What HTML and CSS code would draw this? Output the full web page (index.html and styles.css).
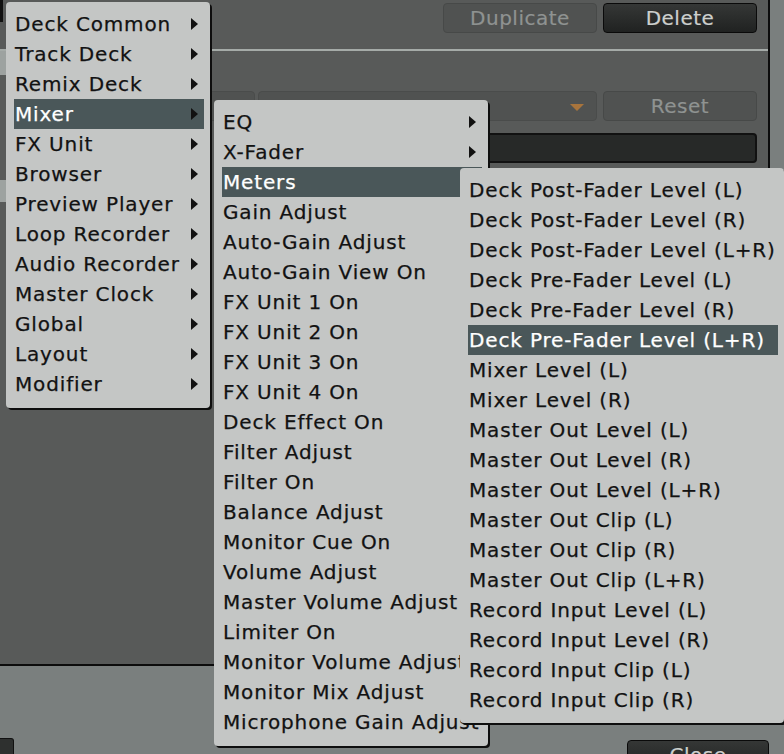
FILE: index.html
```html
<!DOCTYPE html>
<html lang="en">
<head>
    <meta charset="UTF-8">
    <title>Controller Mapping</title>
    <link rel="stylesheet" href="styles.css">
</head>
<body>
    <div class="frame">
        <div class="panel">
            <div class="side">
                <div class="side-mark"></div>
                <div class="side-tab"></div>
                <div class="side-tab low"></div>
            </div>
            <div class="main">
                <div class="row top-row">
                    <button class="btn">Duplicate</button>
                    <button class="btn dark">Delete</button>
                </div>
                <hr class="sep">
                <div class="row mid-row">
                    <div class="box small"></div>
                    <div class="box select"><span class="caret"></span></div>
                    <button class="btn">Reset</button>
                </div>
                <div class="row">
                    <div class="field"></div>
                </div>
            </div>
        </div>
        <div class="footer">
            <div class="foot-left"></div>
            <button class="btn dark close">Close</button>
        </div>

        <!-- menu cascade -->
        <ul class="menu m1">
            <li class="item"><span>Deck Common</span><i class="arrow"></i></li>
            <li class="item"><span>Track Deck</span><i class="arrow"></i></li>
            <li class="item"><span>Remix Deck</span><i class="arrow"></i></li>
            <li class="item on"><span>Mixer</span><i class="arrow"></i></li>
            <li class="item"><span>FX Unit</span><i class="arrow"></i></li>
            <li class="item"><span>Browser</span><i class="arrow"></i></li>
            <li class="item"><span>Preview Player</span><i class="arrow"></i></li>
            <li class="item"><span>Loop Recorder</span><i class="arrow"></i></li>
            <li class="item"><span>Audio Recorder</span><i class="arrow"></i></li>
            <li class="item"><span>Master Clock</span><i class="arrow"></i></li>
            <li class="item"><span>Global</span><i class="arrow"></i></li>
            <li class="item"><span>Layout</span><i class="arrow"></i></li>
            <li class="item"><span>Modifier</span><i class="arrow"></i></li>
        </ul>

        <ul class="menu m2">
            <li class="item"><span>EQ</span><i class="arrow"></i></li>
            <li class="item"><span>X-Fader</span><i class="arrow"></i></li>
            <li class="item on"><span>Meters</span></li>
            <li class="item"><span>Gain Adjust</span></li>
            <li class="item"><span>Auto-Gain Adjust</span></li>
            <li class="item"><span>Auto-Gain View On</span></li>
            <li class="item"><span>FX Unit 1 On</span></li>
            <li class="item"><span>FX Unit 2 On</span></li>
            <li class="item"><span>FX Unit 3 On</span></li>
            <li class="item"><span>FX Unit 4 On</span></li>
            <li class="item"><span>Deck Effect On</span></li>
            <li class="item"><span>Filter Adjust</span></li>
            <li class="item"><span>Filter On</span></li>
            <li class="item"><span>Balance Adjust</span></li>
            <li class="item"><span>Monitor Cue On</span></li>
            <li class="item"><span>Volume Adjust</span></li>
            <li class="item"><span>Master Volume Adjust</span></li>
            <li class="item"><span>Limiter On</span></li>
            <li class="item"><span>Monitor Volume Adjust</span></li>
            <li class="item"><span>Monitor Mix Adjust</span></li>
            <li class="item"><span>Microphone Gain Adjust</span></li>
        </ul>

        <ul class="menu m3">
            <li class="item"><span>Deck Post-Fader Level (L)</span></li>
            <li class="item"><span>Deck Post-Fader Level (R)</span></li>
            <li class="item"><span>Deck Post-Fader Level (L+R)</span></li>
            <li class="item"><span>Deck Pre-Fader Level (L)</span></li>
            <li class="item"><span>Deck Pre-Fader Level (R)</span></li>
            <li class="item on"><span>Deck Pre-Fader Level (L+R)</span></li>
            <li class="item"><span>Mixer Level (L)</span></li>
            <li class="item"><span>Mixer Level (R)</span></li>
            <li class="item"><span>Master Out Level (L)</span></li>
            <li class="item"><span>Master Out Level (R)</span></li>
            <li class="item"><span>Master Out Level (L+R)</span></li>
            <li class="item"><span>Master Out Clip (L)</span></li>
            <li class="item"><span>Master Out Clip (R)</span></li>
            <li class="item"><span>Master Out Clip (L+R)</span></li>
            <li class="item"><span>Record Input Level (L)</span></li>
            <li class="item"><span>Record Input Level (R)</span></li>
            <li class="item"><span>Record Input Clip (L)</span></li>
            <li class="item"><span>Record Input Clip (R)</span></li>
        </ul>
    </div>
</body>
</html>
```

FILE: styles.css
```css
html, body { margin: 0; padding: 0; overflow: hidden; }
body { width: 784px; height: 754px; font-family: "DejaVu Sans", Verdana, sans-serif; }

.frame { position: relative; width: 784px; height: 754px; background: #7a7f7e; overflow: hidden; }

.panel { display: flex; width: 768px; height: 664px; background: #585a59; border-right: 2px solid #0c0c0c; border-bottom: 2px solid #0c0c0c; }
.side { width: 8px; display: flex; flex-direction: column; }
.side-mark { height: 22px; width: 3px; background: #111; }
.side-tab { margin-top: 28px; height: 25px; background: #9da2a0; }
.side-tab.low { margin-top: 105px; height: 22px; }
.main { flex: 1; display: flex; flex-direction: column; padding-right: 11px; }

.row { display: flex; justify-content: flex-end; gap: 6px; }
.top-row { padding-top: 3px; }
.mid-row { margin-top: 40px; }
.row + .row { margin-top: 12px; }

.sep { margin: 16px -11px 0 -8px; border: none; height: 2px; background: #a5aba8; }

.btn { width: 154px; height: 30px; border: 1px solid #474948; border-radius: 4px; background: #505251; color: #8f9391; font-family: inherit; font-size: 20px; letter-spacing: 0.5px; padding: 0; -webkit-text-stroke: 0.2px; }
.btn.dark { background: linear-gradient(#353736, #202221); border-color: #0a0a0a; color: #cdd0ce; }

.box { height: 30px; box-sizing: border-box; border: 1px solid #4a4c4b; border-radius: 4px; background: #505251; }
.box.small { width: 56px; margin-right: -3px; }
.box.select { width: 339px; position: relative; }
.caret { position: absolute; right: 12px; top: 12px; border-top: 7px solid #a8743c; border-left: 7px solid transparent; border-right: 7px solid transparent; }
.field { width: 527px; height: 30px; box-sizing: border-box; border: 2px solid #111; border-radius: 4px; background: #272928; }

.footer { height: 88px; position: relative; }
.foot-left { position: absolute; left: 0; top: 72px; width: 13px; height: 20px; background: #2e302f; border: 1px solid #111; border-left: none; border-radius: 0 3px 0 0; }
.close { position: absolute; left: 627px; top: 74px; width: 142px; }

.menu { position: absolute; margin: 0; list-style: none; background: #c4c6c5; border-radius: 4px; box-shadow: 2px 2px 0 #0e0e0e; font-size: 20px; letter-spacing: 0.85px; color: #121212; -webkit-text-stroke: 0.25px; }
.menu .item { display: flex; align-items: center; justify-content: space-between; height: 30px; line-height: 30px; margin: 0 6px 0 8px; padding-left: 1px; white-space: nowrap; }
.menu .item.on { background: #4a5759; color: #fff; }
.arrow { width: 0; height: 0; margin-right: 6px; border-left: 7px solid #111; border-top: 6px solid transparent; border-bottom: 6px solid transparent; }

.m1 { left: 6px; top: 2px; width: 204px; padding: 7px 0 9px; z-index: 1; }
.m2 { left: 214px; top: 100px; width: 274px; padding: 7px 0 9px; z-index: 2; }
.m3 { left: 460px; top: 168px; width: 324px; padding: 7px 0 8px; z-index: 3; }
.m3 .item { padding-left: 1px; }
```
